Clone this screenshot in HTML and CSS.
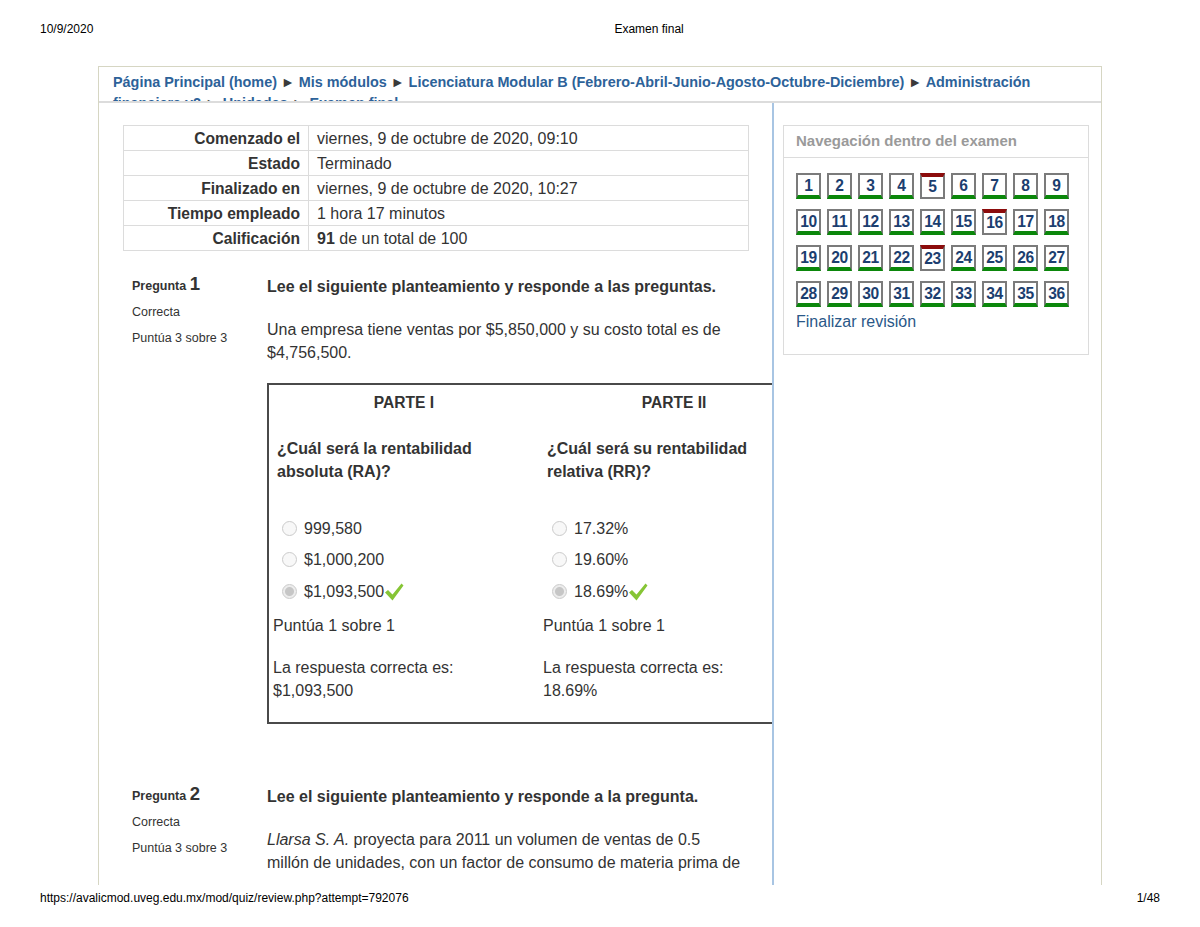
FILE: index.html
```html
<!DOCTYPE html>
<html lang="es">
<head>
<meta charset="utf-8">
<title>Examen final</title>
<link rel="stylesheet" href="styles.css">
</head>
<body>
<header class="print-head">
  <span class="print-date">10/9/2020</span>
  <span class="print-title">Examen final</span>
</header>

<main class="sheet">
  <nav class="crumbs">
    <a href="#">Página Principal (home)</a> <span class="sep">►</span> <a href="#">Mis módulos</a> <span class="sep">►</span> <a href="#">Licenciatura Modular B (Febrero-Abril-Junio-Agosto-Octubre-Diciembre)</a> <span class="sep">►</span> <a href="#">Administración financiera v2</a> <span class="sep">►</span> <a class="u" href="#">Unidades</a> <span class="sep">►</span> <a class="u" href="#">Examen final</a>
  </nav>

  <div class="page-body">
    <section class="region-main">
      <table class="summary">
        <tr><th>Comenzado el</th><td>viernes, 9 de octubre de 2020, 09:10</td></tr>
        <tr><th>Estado</th><td>Terminado</td></tr>
        <tr><th>Finalizado en</th><td>viernes, 9 de octubre de 2020, 10:27</td></tr>
        <tr><th>Tiempo empleado</th><td>1 hora 17 minutos</td></tr>
        <tr><th>Calificación</th><td><b>91</b> de un total de 100</td></tr>
      </table>

      <div class="que">
        <div class="que-info">
          <div class="que-no">Pregunta <span class="qno">1</span></div>
          <div class="que-state">Correcta</div>
          <div class="que-grade">Puntúa 3 sobre 3</div>
        </div>
        <div class="que-content">
          <p class="que-lead">Lee el siguiente planteamiento y responde a las preguntas.</p>
          <p class="que-text">Una empresa tiene ventas por $5,850,000 y su costo total es de $4,756,500.</p>
          <div class="parts">
            <div class="part">
              <p class="part-title">PARTE I</p>
              <p class="part-q">¿Cuál será la rentabilidad absoluta (RA)?</p>
              <div class="opts">
                <div class="opt"><span class="radio"></span>999,580</div>
                <div class="opt"><span class="radio"></span>$1,000,200</div>
                <div class="opt"><span class="radio checked"></span>$1,093,500<svg class="tick" viewBox="0 0 20 20" width="20" height="20"><path d="M1 10.5 L4 8 L8.5 12.5 L17.5 1.5 L19.5 3.5 L8.5 18.5 Z" fill="#86c535"/></svg></div>
              </div>
              <p class="part-grade">Puntúa 1 sobre 1</p>
              <p class="part-right">La respuesta correcta es: $1,093,500</p>
            </div>
            <div class="part">
              <p class="part-title">PARTE II</p>
              <p class="part-q">¿Cuál será su rentabilidad relativa (RR)?</p>
              <div class="opts">
                <div class="opt"><span class="radio"></span>17.32%</div>
                <div class="opt"><span class="radio"></span>19.60%</div>
                <div class="opt"><span class="radio checked"></span>18.69%<svg class="tick" viewBox="0 0 20 20" width="20" height="20"><path d="M1 10.5 L4 8 L8.5 12.5 L17.5 1.5 L19.5 3.5 L8.5 18.5 Z" fill="#86c535"/></svg></div>
              </div>
              <p class="part-grade">Puntúa 1 sobre 1</p>
              <p class="part-right">La respuesta correcta es: 18.69%</p>
            </div>
          </div>
        </div>
      </div>

      <div class="que que-2">
        <div class="que-info">
          <div class="que-no">Pregunta <span class="qno">2</span></div>
          <div class="que-state">Correcta</div>
          <div class="que-grade">Puntúa 3 sobre 3</div>
        </div>
        <div class="que-content">
          <p class="que-lead">Lee el siguiente planteamiento y responde a la pregunta.</p>
          <p class="que-text que-text-2"><i>Llarsa S. A.</i> proyecta para 2011 un volumen de ventas de 0.5 millón de unidades, con un factor de consumo de materia prima de</p>
        </div>
      </div>
    </section>

    <aside class="region-side">
      <div class="navblock">
        <div class="navblock-head">Navegación dentro del examen</div>
        <div class="navblock-body">
          <div class="qn-grid">
            <span class="qn ok">1</span><span class="qn ok">2</span><span class="qn ok">3</span><span class="qn ok">4</span><span class="qn bad">5</span><span class="qn ok">6</span><span class="qn ok">7</span><span class="qn ok">8</span><span class="qn ok">9</span>
            <span class="qn ok">10</span><span class="qn ok">11</span><span class="qn ok">12</span><span class="qn ok">13</span><span class="qn ok">14</span><span class="qn ok">15</span><span class="qn bad">16</span><span class="qn ok">17</span><span class="qn ok">18</span>
            <span class="qn ok">19</span><span class="qn ok">20</span><span class="qn ok">21</span><span class="qn ok">22</span><span class="qn bad">23</span><span class="qn ok">24</span><span class="qn ok">25</span><span class="qn ok">26</span><span class="qn ok">27</span>
            <span class="qn ok">28</span><span class="qn ok">29</span><span class="qn ok">30</span><span class="qn ok">31</span><span class="qn ok">32</span><span class="qn ok">33</span><span class="qn ok">34</span><span class="qn ok">35</span><span class="qn ok">36</span>
          </div>
          <a class="finish" href="#">Finalizar revisión</a>
        </div>
      </div>
    </aside>
  </div>
</main>

<footer class="print-foot">
  <span>https://avalicmod.uveg.edu.mx/mod/quiz/review.php?attempt=792076</span>
  <span>1/48</span>
</footer>
</body>
</html>
```

FILE: styles.css
```css
* { box-sizing: border-box; }

html, body {
  margin: 0;
  padding: 0;
  background: #fff;
}

body {
  font-family: "Liberation Sans", Arial, sans-serif;
  color: #333;
  width: 1200px;
  height: 927px;
  overflow: hidden;
}

p { margin: 0; }

/* print header / footer */
.print-head {
  height: 66px;
  padding: 22px 40px 0 40px;
  display: flex;
  font-size: 12px;
  line-height: 14px;
  color: #000;
}
.print-title { margin-left: 521px; }

.print-foot {
  display: flex;
  justify-content: space-between;
  padding: 6px 40px 0 40px;
  font-size: 12px;
  line-height: 14px;
  color: #000;
}

/* sheet */
.sheet {
  margin-left: 98px;
  width: 1004px;
  height: 819px;
  border: 1px solid #d6d6c3;
  border-bottom: none;
  overflow: hidden;
}

.crumbs {
  height: 36px;
  padding: 5px 14px 0 14px;
  font-size: 14.4px;
  line-height: 21px;
  font-weight: bold;
  overflow: hidden;
  border-bottom: 2px solid #dcdcdc;
}
.crumbs a { color: #2d6299; text-decoration: none; }
.crumbs a.u { text-decoration: underline; }
.crumbs .sep { color: #3a3a3a; font-size: 14px; }

.page-body {
  display: flex;
  height: 782px;
}

.region-main {
  width: 675px;
  flex: none;
  border-right: 2px solid #a8c5e3;
  padding: 22px 0 0 24px;
  overflow: hidden;
}

.region-side {
  flex: 1;
  padding: 22px 0 0 9px;
}

/* summary table */
.summary {
  width: 626px;
  border-collapse: collapse;
  font-size: 16px;
}
.summary th, .summary td {
  border: 1px solid #dcdcdc;
  height: 25px;
  padding: 0 8px;
  line-height: 23px;
}
.summary th {
  width: 185px;
  text-align: right;
  font-weight: bold;
  font-size: 15.6px;
}
.summary td { text-align: left; }

/* questions */
.que {
  display: flex;
  margin-top: 24px;
  margin-left: 9px;
}
.que-2 { margin-top: 61px; }

.que-info {
  width: 135px;
  flex: none;
  font-size: 12.5px;
  color: #333;
}
.que-no {
  font-weight: bold;
  line-height: 20px;
  margin-top: -1px;
}
.que-no .qno { font-size: 18.5px; }
.que-state { margin-top: 6px; line-height: 20px; }
.que-grade { margin-top: 6px; line-height: 20px; }

.que-content {
  flex: none;
  width: 560px;
  font-size: 16px;
  line-height: 23px;
}
.que-lead { font-weight: bold; }
.que-text { margin-top: 19.5px; width: 480px; }
.que-text-2 { width: 477.5px; }

.parts {
  margin-top: 19.5px;
  width: 544px;
  border: 2px solid #4a4a4a;
  display: flex;
  padding: 6px 0 20.5px 0;
}
.part {
  width: 270px;
  padding: 0 8px;
}
.part-title {
  text-align: center;
  font-weight: bold;
  font-size: 15.6px;
}
.part-q {
  margin-top: 22.5px;
  font-weight: bold;
  width: 230px;
}
.opts { margin-top: 30px; }
.opt {
  display: flex;
  align-items: center;
  height: 31.5px;
  line-height: 23px;
}
.radio {
  width: 15px;
  height: 15px;
  border-radius: 50%;
  border: 1px solid #cbcbcb;
  background: #f8f8f8;
  margin: 0 7px 0 5px;
  flex: none;
}
.radio.checked {
  background: radial-gradient(circle, #c6c6c6 0 4px, #ececec 5px);
}
.tick { flex: none; margin-top: 2px; }

.part-grade { margin-top: 6.5px; margin-left: -4px; }
.part-right { margin-top: 19px; margin-left: -4px; width: 200px; }

/* nav block */
.navblock {
  width: 306px;
  height: 230px;
  border: 1px solid #dcdcdc;
}
.navblock-head {
  height: 32px;
  padding: 5px 12px 0 12px;
  line-height: 20px;
  font-size: 15px;
  font-weight: bold;
  color: #9a9a9a;
  border-bottom: 1px solid #dcdcdc;
}
.navblock-body { padding: 15px 0 0 12px; }
.qn-grid {
  display: grid;
  grid-template-columns: repeat(9, 25px);
  column-gap: 6px;
  row-gap: 10px;
}
.qn {
  width: 25px;
  height: 26px;
  border: 2px solid #7b7b7b;
  font-weight: bold;
  font-size: 15.6px;
  color: #1c3e6f;
  text-align: center;
  line-height: 21px;
  letter-spacing: -0.3px;
}
.qn.ok { border-bottom: 4px solid #0b870b; }
.qn.bad { border-top: 4px solid #8c0c0c; line-height: 19px; }
.finish {
  display: block;
  margin-top: 4px;
  font-size: 16px;
  line-height: 22px;
  color: #2a5888;
  text-decoration: none;
}
```
